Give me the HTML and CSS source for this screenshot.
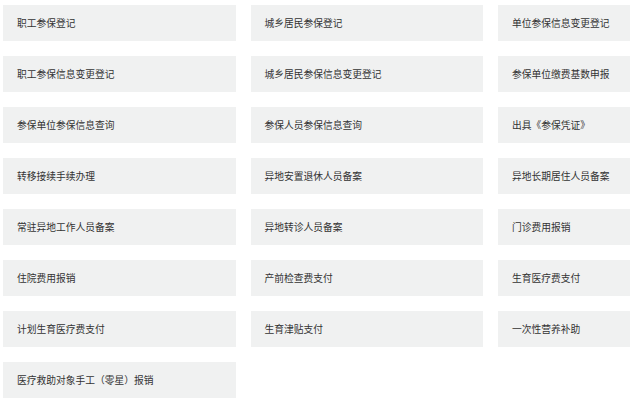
FILE: index.html
```html
<!DOCTYPE html>
<html lang="zh">
<head>
<meta charset="utf-8">
<link rel="stylesheet" href="styles.css">
</head>
<body>
<div class="grid">
  <div class="card">职工参保登记</div>
  <div class="card">城乡居民参保登记</div>
  <div class="card">单位参保信息变更登记</div>
  <div class="card">职工参保信息变更登记</div>
  <div class="card">城乡居民参保信息变更登记</div>
  <div class="card">参保单位缴费基数申报</div>
  <div class="card">参保单位参保信息查询</div>
  <div class="card">参保人员参保信息查询</div>
  <div class="card">出具《参保凭证》</div>
  <div class="card">转移接续手续办理</div>
  <div class="card">异地安置退休人员备案</div>
  <div class="card">异地长期居住人员备案</div>
  <div class="card">常驻异地工作人员备案</div>
  <div class="card">异地转诊人员备案</div>
  <div class="card">门诊费用报销</div>
  <div class="card">住院费用报销</div>
  <div class="card">产前检查费支付</div>
  <div class="card">生育医疗费支付</div>
  <div class="card">计划生育医疗费支付</div>
  <div class="card">生育津贴支付</div>
  <div class="card">一次性营养补助</div>
  <div class="card">医疗救助对象手工（零星）报销</div>
</div>
</body>
</html>
```
FILE: styles.css
```css
html, body {
  margin: 0;
  padding: 0;
  overflow: hidden;
  background: #ffffff;
}
body {
  width: 630px;
  height: 398px;
  font-family: "Noto Sans CJK SC", "Noto Sans", sans-serif;
}
.grid {
  display: grid;
  grid-template-columns: repeat(3, 232.5px);
  column-gap: 15px;
  row-gap: 15px;
  padding: 5px 0 0 3px;
}
.card {
  height: 36px;
  background: #f0f1f1;
  color: #333333;
  font-size: 9.75px;
  line-height: 36px;
  padding-left: 14px;
  white-space: nowrap;
}
```
